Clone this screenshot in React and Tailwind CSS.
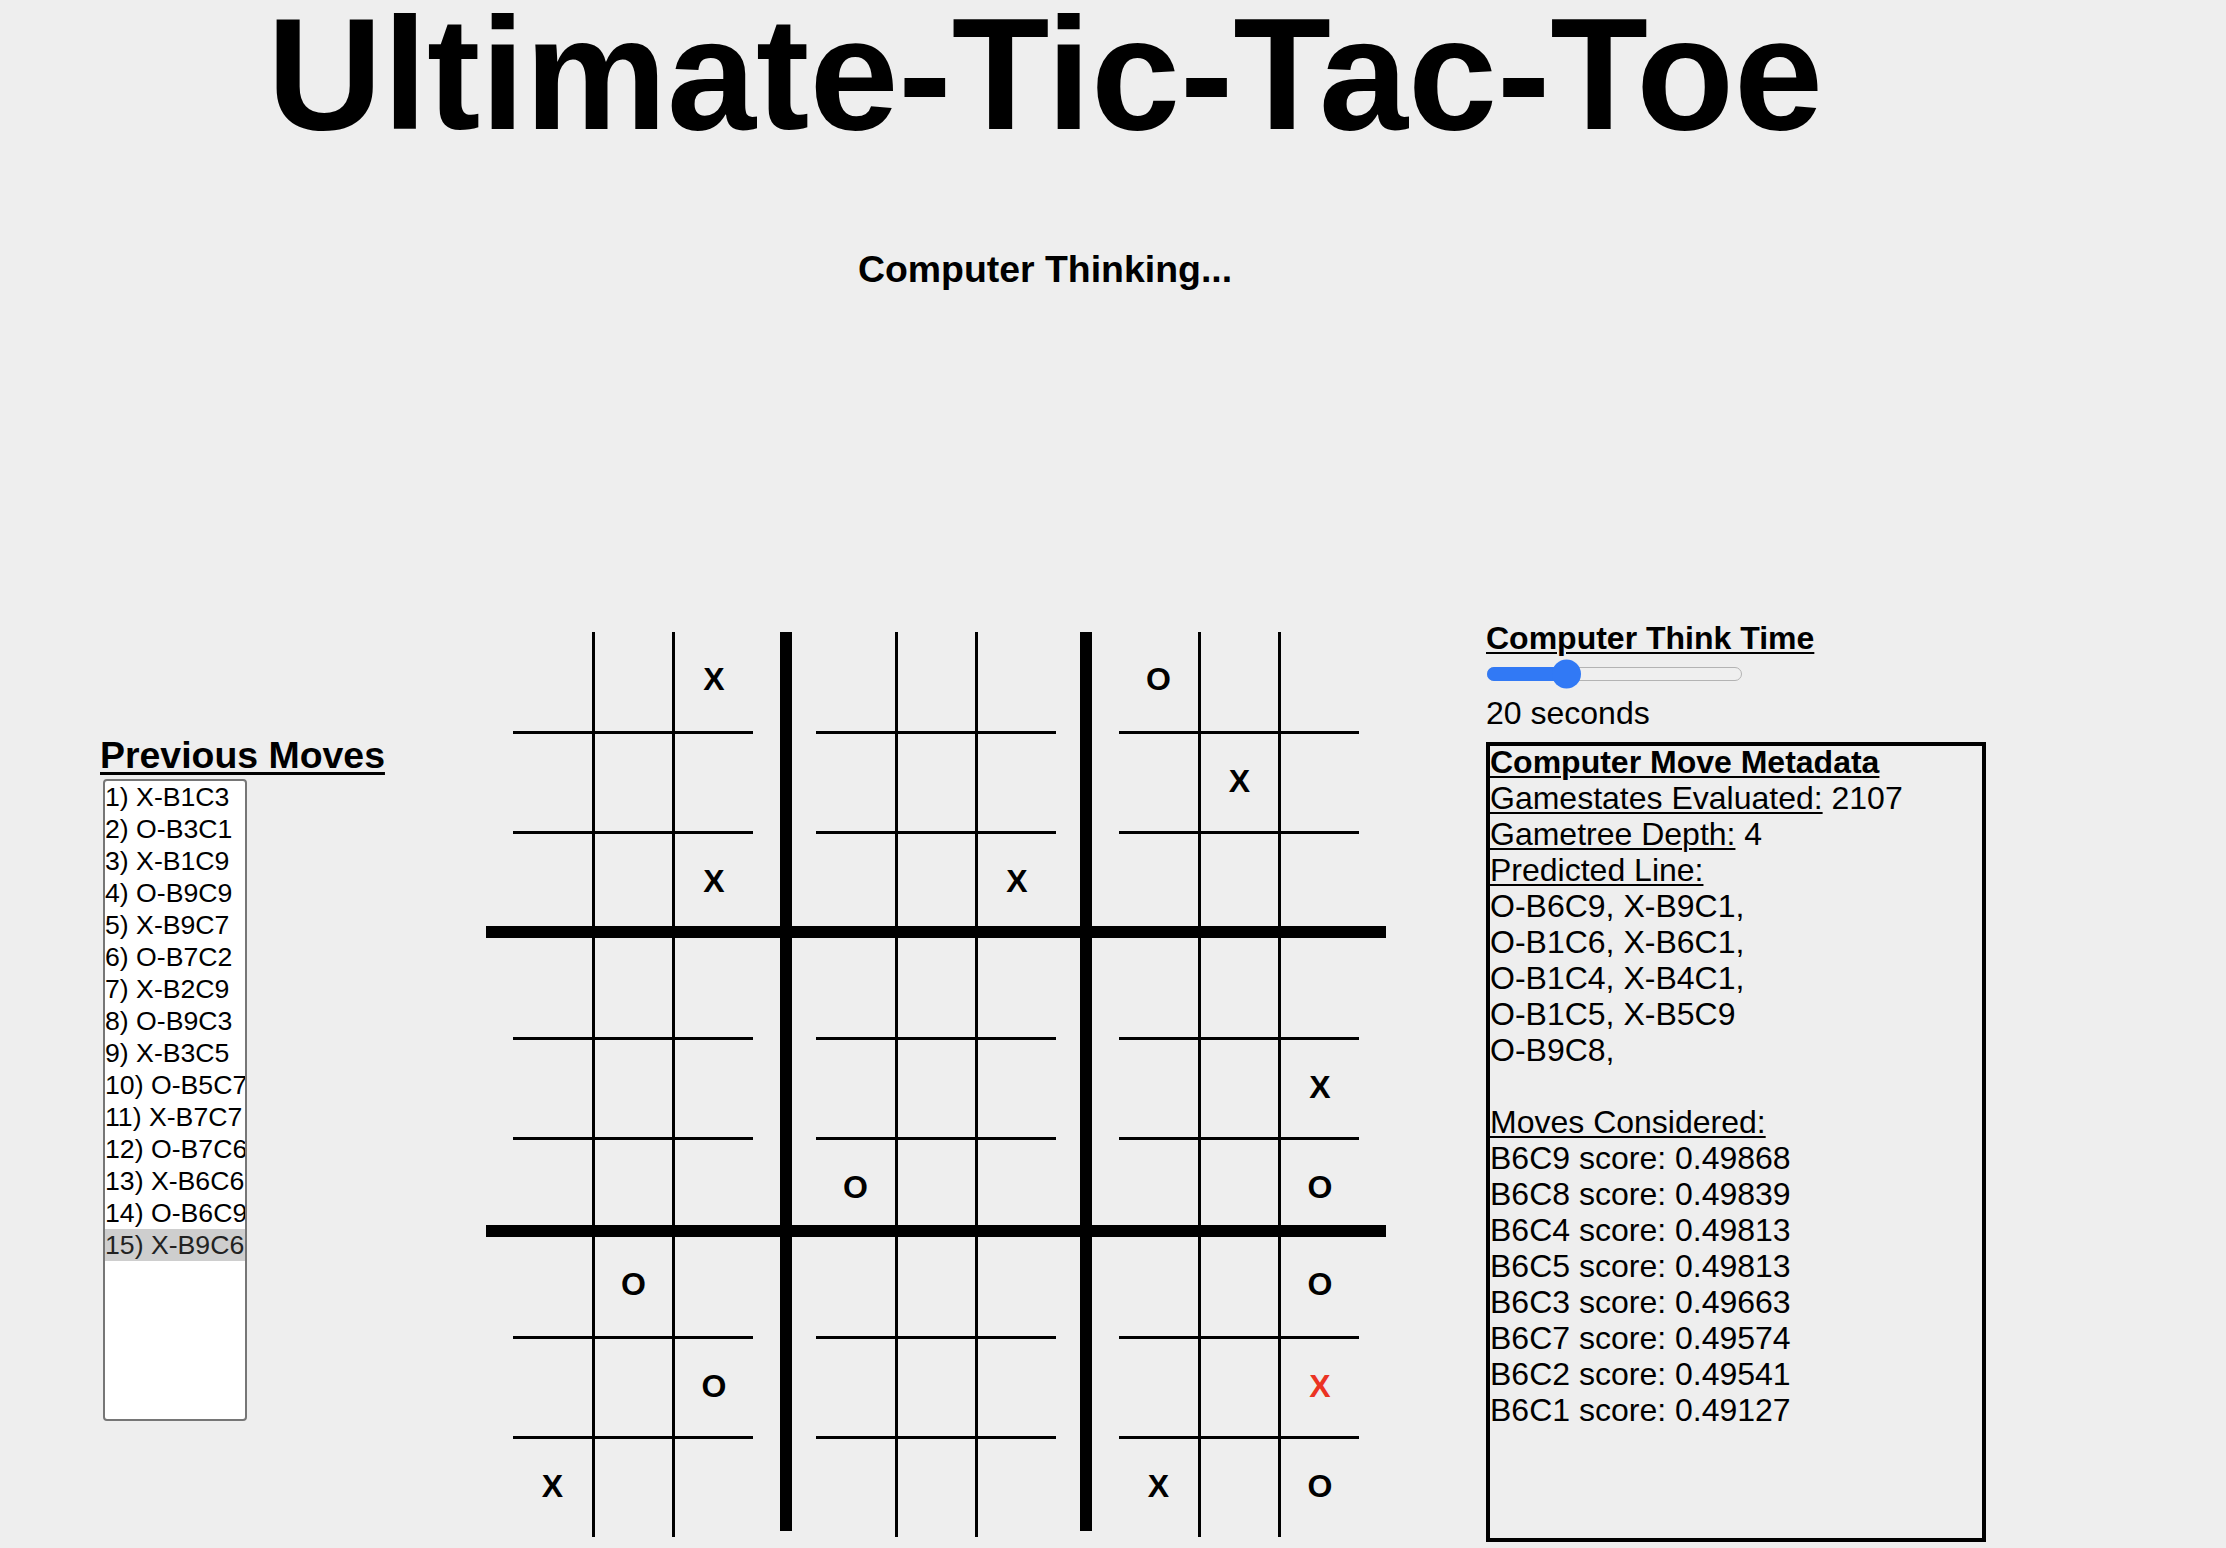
import React from "react";

const BOARDS = [
  { 3: "X", 9: "X" },
  { 9: "X" },
  { 1: "O", 5: "X" },
  {},
  { 7: "O" },
  { 6: "X", 9: "O" },
  { 2: "O", 6: "O", 7: "X" },
  {},
  { 3: "O", 6: "R", 7: "X", 9: "O" },
];

const MOVES = [
  "1) X-B1C3",
  "2) O-B3C1",
  "3) X-B1C9",
  "4) O-B9C9",
  "5) X-B9C7",
  "6) O-B7C2",
  "7) X-B2C9",
  "8) O-B9C3",
  "9) X-B3C5",
  "10) O-B5C7",
  "11) X-B7C7",
  "12) O-B7C6",
  "13) X-B6C6",
  "14) O-B6C9",
  "15) X-B9C6",
];

const SCORES = [
  ["B6C9", "0.49868"],
  ["B6C8", "0.49839"],
  ["B6C4", "0.49813"],
  ["B6C5", "0.49813"],
  ["B6C3", "0.49663"],
  ["B6C7", "0.49574"],
  ["B6C2", "0.49541"],
  ["B6C1", "0.49127"],
];

function Cell({ m, w }) {
  const red = m === "R";
  return (
    <div className={`${w} flex h-full shrink-0 justify-center`}>
      {m ? (
        <span
          className={`h-[94px] text-[32px] leading-[94px] font-bold ${
            red ? "text-[#eb3323]" : "text-black"
          }`}
        >
          {red ? "X" : m}
        </span>
      ) : null}
    </div>
  );
}

function CellRow({ marks, r, h }) {
  return (
    <div className={`flex ${h}`}>
      <Cell m={marks[r * 3 + 1]} w="w-[79px]" />
      <div className="w-[3px] shrink-0 bg-black" />
      <Cell m={marks[r * 3 + 2]} w="w-[77px]" />
      <div className="w-[3px] shrink-0 bg-black" />
      <Cell m={marks[r * 3 + 3]} w="w-[78px]" />
    </div>
  );
}

function SubBoard({ marks }) {
  return (
    <div className="mx-auto flex h-full w-[240px] flex-col">
      <CellRow marks={marks} r={0} h="h-[99px] shrink-0" />
      <div className="h-[3px] shrink-0 bg-black" />
      <CellRow marks={marks} r={1} h="h-[97px] shrink-0" />
      <div className="h-[3px] shrink-0 bg-black" />
      <CellRow marks={marks} r={2} h="min-h-0 flex-1" />
    </div>
  );
}

function BoardRow({ idx, h, bar }) {
  return (
    <div className={`flex min-h-0 shrink-0 overflow-visible ${h}`}>
      <div className="h-full w-[294px] shrink-0">
        <SubBoard marks={BOARDS[idx * 3]} />
      </div>
      <div className={`w-[12px] shrink-0 bg-black ${bar}`} />
      <div className="h-full w-[288px] shrink-0">
        <SubBoard marks={BOARDS[idx * 3 + 1]} />
      </div>
      <div className={`w-[12px] shrink-0 bg-black ${bar}`} />
      <div className="h-full w-[294px] shrink-0">
        <SubBoard marks={BOARDS[idx * 3 + 2]} />
      </div>
    </div>
  );
}

export default function App() {
  return (
    <div className="h-[1548px] overflow-hidden bg-[#eeeeee] font-['Liberation_Sans',Arial,sans-serif] text-black">
      <div className="w-[2090px]">
        <h1 className="text-center text-[160px] font-bold leading-[148px]">
          Ultimate-Tic-Tac-Toe
        </h1>
        <h3 className="mt-[100px] text-center text-[37.44px] font-bold leading-[43px]">
          Computer Thinking...
        </h3>

        <div className="mt-[329px] flex items-start pl-[100px]">
          {/* Previous moves */}
          <div className="mt-[114px] w-[286px] shrink-0">
            <h3 className="text-[37.44px] font-bold leading-[43px] underline decoration-[2.5px] underline-offset-[4px]">
              Previous Moves
            </h3>
            <div className="ml-[3px] mt-[2px] h-[642px] w-[144px] overflow-hidden rounded-[4px] border-2 border-[#767676] bg-white">
              {MOVES.map((m, i) => (
                <div
                  key={m}
                  className={`h-[32px] whitespace-nowrap text-[26.67px] leading-[32px] ${
                    i === MOVES.length - 1
                      ? "bg-[#cecece] text-[#222222]"
                      : "text-black"
                  }`}
                >
                  {m}
                </div>
              ))}
            </div>
          </div>

          {/* Board */}
          <div className="ml-[100px] mt-[12px] flex h-[905px] w-[900px] shrink-0 flex-col">
            <BoardRow idx={0} h="h-[294px]" bar="" />
            <div className="h-[12px] shrink-0 bg-black" />
            <BoardRow idx={1} h="h-[287px]" bar="" />
            <div className="h-[12px] shrink-0 bg-black" />
            <BoardRow idx={2} h="h-[300px]" bar="h-[294px] self-start" />
          </div>

          {/* Right panel */}
          <div className="ml-[100px] w-[500px] shrink-0 text-[32px]">
            <div className="font-bold leading-[37px] underline decoration-2 underline-offset-[3px]">
              Computer Think Time
            </div>
            <div className="h-[38px] pt-[10px]">
              <div className="relative ml-[1px] h-[14px] w-[255px] rounded-full border-[1.5px] border-[#b3b3b3] bg-[#efefef]">
                <div className="absolute -left-[1.5px] -top-[1.5px] h-[14px] w-[80px] rounded-l-full bg-[#3179f5]" />
                <div className="absolute left-[64px] top-1/2 h-[29px] w-[29px] -translate-y-1/2 rounded-full bg-[#3179f5]" />
              </div>
            </div>
            <div className="leading-[37px]">20 seconds</div>
            <div className="mt-[10px] h-[800px] w-[500px] border-4 border-black">
              <div className="-mt-[2px] leading-[36px]">
                <div className="font-bold underline decoration-2 underline-offset-[3px]">
                  Computer Move Metadata
                </div>
                <div>
                  <span className="underline decoration-2 underline-offset-[3px]">
                    Gamestates Evaluated:
                  </span>{" "}
                  2107
                </div>
                <div>
                  <span className="underline decoration-2 underline-offset-[3px]">
                    Gametree Depth:
                  </span>{" "}
                  4
                </div>
                <div>
                  <span className="underline decoration-2 underline-offset-[3px]">
                    Predicted Line:
                  </span>
                </div>
                <div>O-B6C9, X-B9C1,</div>
                <div>O-B1C6, X-B6C1,</div>
                <div>O-B1C4, X-B4C1,</div>
                <div>O-B1C5, X-B5C9</div>
                <div>O-B9C8,</div>
                <div className="h-[36px]" />
                <div>
                  <span className="underline decoration-2 underline-offset-[3px]">
                    Moves Considered:
                  </span>
                </div>
                {SCORES.map(([c, s]) => (
                  <div key={c}>
                    {c} score: {s}
                  </div>
                ))}
              </div>
            </div>
          </div>
        </div>
      </div>
    </div>
  );
}
